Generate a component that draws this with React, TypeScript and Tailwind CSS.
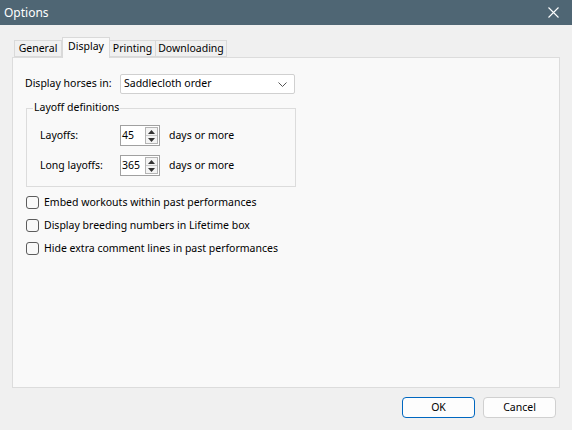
import { useState } from "react";

const font = { fontFamily: '"Noto Sans", "Open Sans", sans-serif' };

function Spin({ value }: { value: string }) {
  return (
    <div className="flex h-[21px] w-[40px] items-stretch border border-[#a0a0a0] bg-white">
      <div className="flex flex-1 items-center pl-[1px] text-[10.5px] text-black">{value}</div>
      <div className="my-[1px] mr-[1px] flex w-[13px] flex-col border border-[#b4b4b4] bg-[#f4f4f4]">
        <div className="flex flex-1 items-center justify-center border-b border-[#c8c8c8]">
          <svg width="7" height="4" viewBox="0 0 7 4">
            <path d="M0 4 L3.5 0 L7 4 Z" fill="#333" />
          </svg>
        </div>
        <div className="flex flex-1 items-center justify-center">
          <svg width="7" height="4" viewBox="0 0 7 4">
            <path d="M0 0 L3.5 4 L7 0 Z" fill="#333" />
          </svg>
        </div>
      </div>
    </div>
  );
}

function Check({ label }: { label: string }) {
  const [on, setOn] = useState(false);
  return (
    <label className="flex h-[23px] items-center gap-[5px]" onClick={() => setOn(!on)}>
      <span className="flex h-[13px] w-[13px] items-center justify-center rounded-[3px] border border-[#5c5c5c] bg-[#f9f9f9]">
        {on && (
          <svg width="9" height="7" viewBox="0 0 9 7">
            <path d="M1 3.5 L3.5 6 L8 1" stroke="#000" fill="none" strokeWidth="1.3" />
          </svg>
        )}
      </span>
      <span className="text-[10.5px] text-black">{label}</span>
    </label>
  );
}

export default function App() {
  const tabs = [
    { name: "General", w: "w-[48px]" },
    { name: "Display", w: "w-[48px]" },
    { name: "Printing", w: "w-[46px]" },
    { name: "Downloading", w: "w-[71px]" },
  ];
  const [tab, setTab] = useState("Display");

  return (
    <div className="flex h-[430px] w-[572px] flex-col bg-[#f0f0f0]" style={font}>
      <div className="flex h-[25px] items-center justify-between bg-[#4f6674] pl-[4px] pr-[13px]">
        <span className="text-[12px] text-white">Options</span>
        <svg width="11" height="11" viewBox="0 0 11 11">
          <path d="M0.5 0.5 L10.5 10.5 M10.5 0.5 L0.5 10.5" stroke="#fff" strokeWidth="1.1" />
        </svg>
      </div>

      <div className="ml-[14px] mt-[12px] flex h-[20px] items-end">
        {tabs.map((t) => (
          <button
            key={t.name}
            onClick={() => setTab(t.name)}
            className={`flex items-center justify-center border border-[#d9d9d9] text-[10.5px] text-black ${t.w} ${
              t.name === tab
                ? "relative z-10 -mb-[1px] h-[21px] border-b-0 bg-[#f9f9f9] pb-[3px]"
                : "h-[17px] bg-[#f0f0f0] border-l-0 first:border-l"
            }`}
          >
            {t.name}
          </button>
        ))}
      </div>

      <div className="mx-[12px] flex h-[331px] flex-col border border-[#dcdcdc] bg-[#f9f9f9] pl-[12px] pt-[16px]">
        <div className="flex items-center">
          <span className="w-[95px] text-[10.5px] text-black">Display horses in:</span>
          <div className="flex h-[20px] w-[175px] items-center justify-between rounded-[2px] border border-[#d0d0d0] bg-white pl-[3px] pr-[7px]">
            <span className="text-[10.5px] text-black">Saddlecloth order</span>
            <svg width="9" height="5" viewBox="0 0 9 5">
              <path d="M0.5 0.5 L4.5 4.5 L8.5 0.5" stroke="#555" fill="none" strokeWidth="1" />
            </svg>
          </div>
        </div>

        <div className="relative ml-[1px] mt-[14px] flex h-[79px] w-[270px] flex-col gap-[9px] border border-[#dcdcdc] pl-[13px] pt-[16px]">
          <span className="absolute -top-[9px] left-[6px] bg-[#f9f9f9] px-[1px] text-[10.5px] text-black">
            Layoff definitions
          </span>
          <div className="flex items-center">
            <span className="w-[80px] text-[10.5px] text-black">Layoffs:</span>
            <Spin value="45" />
            <span className="ml-[9px] text-[10.5px] text-black">days or more</span>
          </div>
          <div className="flex items-center">
            <span className="w-[80px] text-[10.5px] text-black">Long layoffs:</span>
            <Spin value="365" />
            <span className="ml-[9px] text-[10.5px] text-black">days or more</span>
          </div>
        </div>

        <div className="ml-[1px] mt-[4px] flex flex-col">
          <Check label="Embed workouts within past performances" />
          <Check label="Display breeding numbers in Lifetime box" />
          <Check label="Hide extra comment lines in past performances" />
        </div>
      </div>

      <div className="mt-[9px] flex justify-end gap-[8px] pr-[16px]">
        <button className="h-[21px] w-[73px] rounded-[4px] border border-[#0067c0] bg-[#fdfdfd] text-[10.5px] text-black">
          OK
        </button>
        <button className="h-[21px] w-[73px] rounded-[4px] border border-[#d0d0d0] bg-[#fdfdfd] text-[10.5px] text-black">
          Cancel
        </button>
      </div>
    </div>
  );
}
